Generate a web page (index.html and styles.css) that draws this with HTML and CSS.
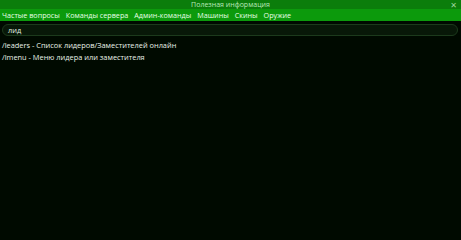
FILE: index.html
```html
<!DOCTYPE html>
<html lang="ru">
  <head>
    <meta charset="UTF-8" />
    <title>Полезная информация</title>
    <link rel="stylesheet" href="styles.css">
  </head>
  <body>
    <div class="window">
      <div class="titlebar">
        <span class="title">Полезная информация</span>
        <span class="close">&#x2715;</span>
      </div>
      <div class="tabs">
        <span class="tab">Частые вопросы</span>
        <span class="tab">Команды сервера</span>
        <span class="tab">Админ-команды</span>
        <span class="tab">Машины</span>
        <span class="tab">Скины</span>
        <span class="tab">Оружие</span>
      </div>
      <div class="content">
        <div class="search">лид</div>
        <div class="results">
          <p>/leaders - Список лидеров/Заместителей онлайн</p>
          <p>/lmenu - Меню лидера или заместителя</p>
        </div>
      </div>
    </div>
  </body>
</html>
```

FILE: styles.css
```css
body {
  margin: 0;
  background-color: #000a00;
  font-family: "Open Sans", "DejaVu Sans", sans-serif;
  font-size: 7.4px;
}
.window {
  height: 240px;
  display: flex;
  flex-direction: column;
  background-color: #000a00;
}
.titlebar {
  height: 9px;
  background-color: #0b7d0b;
  display: flex;
  align-items: center;
  justify-content: center;
  position: relative;
  color: #b8e8b8;
  font-size: 7px;
}
.close {
  position: absolute;
  right: 4px;
  top: 0;
  font-size: 8px;
  line-height: 9px;
  color: #9ad49a;
}
.tabs {
  height: 12px;
  background-color: #0c9a0c;
  display: flex;
  align-items: center;
  gap: 6px;
  padding-left: 2px;
  color: #e6ffe6;
  font-size: 7.2px;
}
.content {
  padding: 3px 3px 0 2px;
}
.search {
  height: 10px;
  border: 1px solid #1c3a1c;
  background-color: #081808;
  border-radius: 6px;
  color: #e0f0e0;
  padding-left: 5px;
  line-height: 10px;
}
.results {
  padding-top: 3px;
}
.results p {
  margin: 0;
  color: #e8f2e8;
  line-height: 12px;
}
```
